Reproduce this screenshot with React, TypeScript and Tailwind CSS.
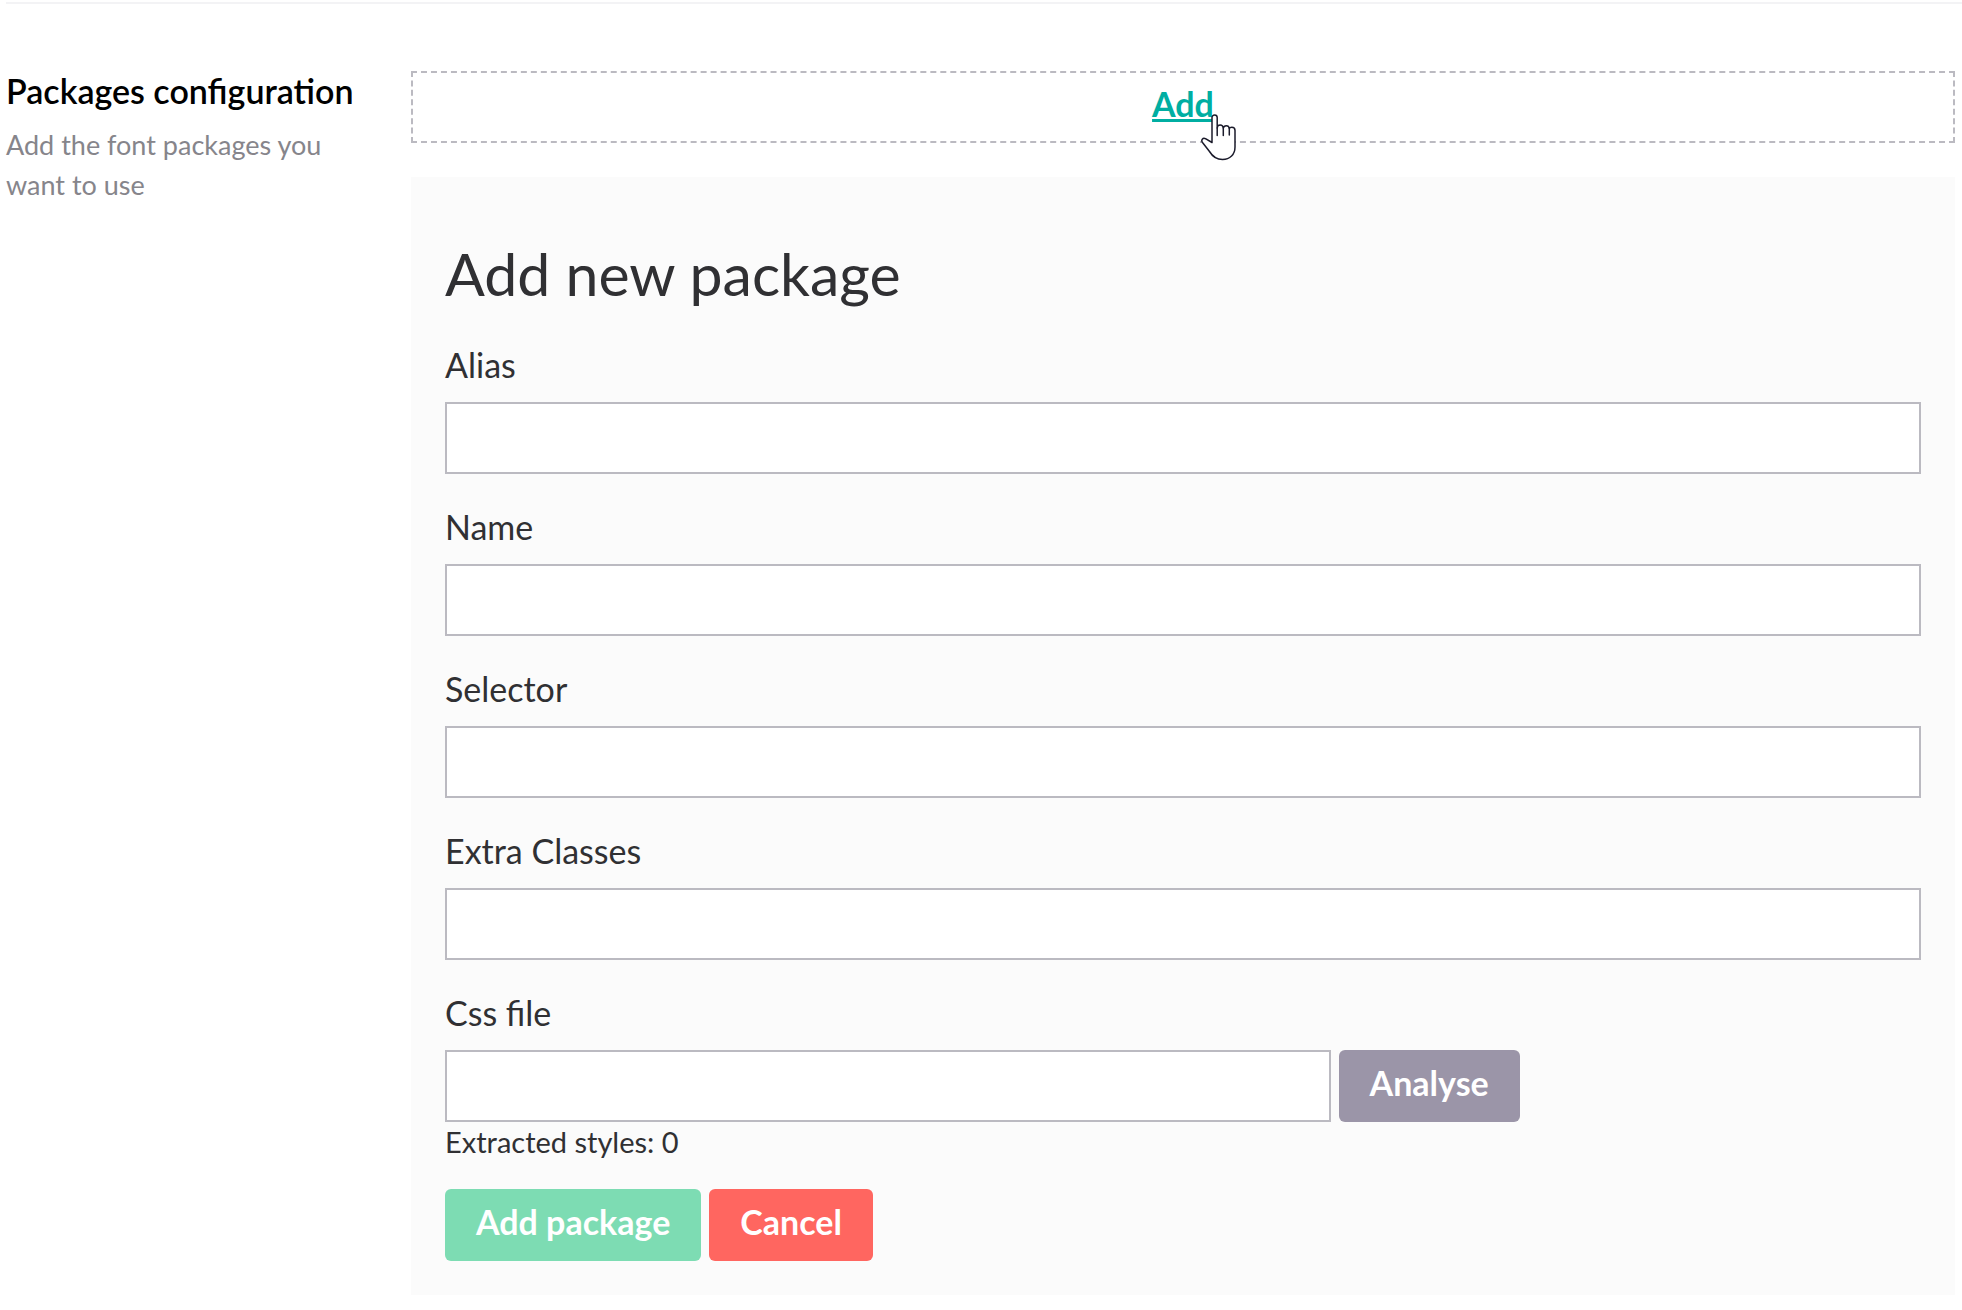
import { useState } from "react";

const fields = [
  { id: "alias", label: "Alias" },
  { id: "name", label: "Name" },
  { id: "selector", label: "Selector" },
  { id: "extraClasses", label: "Extra Classes" },
];

const labelClass = "block text-[34px] leading-[38px] mb-[18px]";
const inputClass =
  "block h-[72px] px-4 text-[34px] bg-white border-2 border-[#bbbac1] outline-none";
const buttonClass =
  "h-[72px] px-[31px] pb-1.5 rounded-md text-[34px] leading-[40px] font-bold text-white cursor-pointer";

const HandCursor = () => (
  <svg
    className="absolute left-[49px] top-[30px] w-[36px] h-[48px]"
    viewBox="0 0 36 48"
    fill="#fff"
    stroke="#1b1b2b"
    strokeWidth="1.5"
    strokeLinecap="round"
    strokeLinejoin="round"
    aria-hidden="true"
  >
    <path d="M11 28.500V3.500a2.600 2.600 0 0 1 5.200 0V14C16.200 12 17.500 11 19.200 11S22 12 22.300 14C22.600 12.500 24 11.700 25.400 11.700S28 12.600 28.300 14.500C28.700 13.500 29.800 13.300 30.800 13.300C32.800 13.300 34 14.500 34 16.500V33C34 40.500 29 45.500 21.500 45.500C15.500 45.500 11.500 42.500 8.500 37.500L1.500 28.500C-.3 26 1.800 23.500 4.500 24.700z" />
    <path d="M16.200 14v7.500M22.300 14v7.500M28.300 14.500v6.500" />
  </svg>
);

const App = () => {
  const [open, setOpen] = useState(true);
  const [values, setValues] = useState<Record<string, string>>({});

  const setValue = (id: string, value: string) => {
    setValues((prev) => ({ ...prev, [id]: value }));
  };

  return (
    <div className="pl-1.5 pt-0.5 font-['Lato',sans-serif] text-[#303033]">
      <div className="border-t-2 border-[#f3f3f5] pt-[67px] pr-[7px] flex items-start">
        <div className="w-[405px] shrink-0 pr-11">
          <h2 className="text-[34px] leading-[40px] font-semibold text-black whitespace-nowrap">
            Packages configuration
          </h2>
          <p className="mt-3.5 text-[27px] leading-[40px] text-[#86858b]">
            Add the font packages you want to use
          </p>
        </div>

        <div className="flex-1 min-w-0">
          <div className="h-[72px] border-2 border-dashed border-[#bbbac1] flex justify-center items-start pt-[11px]">
            <div className="relative">
              <button
                type="button"
                onClick={() => setOpen(true)}
                className="text-[34px] leading-[40px] font-bold text-[#00aea2] underline decoration-[3px] underline-offset-2 cursor-pointer"
              >
                Add
              </button>
              <HandCursor />
            </div>
          </div>

          {open && (
            <form
              onSubmit={(e) => e.preventDefault()}
              className="mt-[34px] p-[34px] bg-[#fbfbfb]"
            >
              <h1 className="mt-[27px] mb-9 text-[59px] leading-[72px]">Add new package</h1>

              {fields.map((field) => (
                <div key={field.id} className="mb-[34px]">
                  <label htmlFor={field.id} className={labelClass}>
                    {field.label}
                  </label>
                  <input
                    id={field.id}
                    type="text"
                    className={`${inputClass} w-full`}
                    value={values[field.id] ?? ""}
                    onChange={(e) => setValue(field.id, e.target.value)}
                  />
                </div>
              ))}

              <label htmlFor="cssFile" className={labelClass}>
                Css file
              </label>
              <div className="flex gap-2">
                <input
                  id="cssFile"
                  type="text"
                  className={`${inputClass} w-3/5`}
                  value={values.cssFile ?? ""}
                  onChange={(e) => setValue("cssFile", e.target.value)}
                />
                <button type="button" className={`${buttonClass} bg-[#9b95a8]`}>
                  Analyse
                </button>
              </div>
              <p className="text-[29px] leading-[40px]">Extracted styles: 0</p>

              <div className="mt-[27px] flex gap-2">
                <button type="submit" className={`${buttonClass} bg-[#7ddcb3]`}>
                  Add package
                </button>
                <button
                  type="button"
                  onClick={() => setOpen(false)}
                  className={`${buttonClass} bg-[#ff6660]`}
                >
                  Cancel
                </button>
              </div>
            </form>
          )}
        </div>
      </div>
    </div>
  );
};

export default App;
